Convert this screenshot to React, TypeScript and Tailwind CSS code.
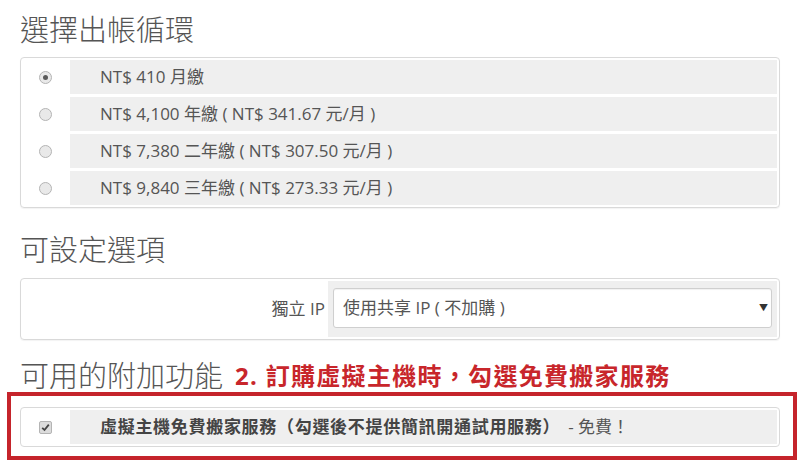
import React from "react";

const FONT = '"Open Sans", "Noto Sans CJK TC", sans-serif';

function Radio({ checked }: { checked?: boolean }) {
  return (
    <span className="flex h-[13px] w-[13px] items-center justify-center rounded-full border border-[#b4b4b4] bg-[#e9e9e9]">
      {checked && <span className="h-[5px] w-[5px] rounded-full bg-[#5a5a5a]" />}
    </span>
  );
}

function Check() {
  return (
    <span className="flex h-[13px] w-[13px] items-center justify-center rounded-[2px] border border-[#b4b4b4] bg-[#dcdcdc]">
      <svg width="9" height="9" viewBox="0 0 9 9">
        <path d="M1.2 4.8 L3.5 7 L7.8 1.6" fill="none" stroke="#444" strokeWidth="1.8" />
      </svg>
    </span>
  );
}

const rows = [
  { t: "NT$ 410 月繳", c: true },
  { t: "NT$ 4,100 年繳 ( NT$ 341.67 元/月 )" },
  { t: "NT$ 7,380 二年繳 ( NT$ 307.50 元/月 )" },
  { t: "NT$ 9,840 三年繳 ( NT$ 273.33 元/月 )" },
];

export default function App() {
  return (
    <div
      className="h-[468px] w-[800px] overflow-hidden bg-white px-[20px] text-[#555]"
      style={{ fontFamily: FONT }}
    >
      <h2 className="mt-[14px] h-[32px] text-[29px] font-light leading-[32px] text-[#555]">
        選擇出帳循環
      </h2>
      <div className="mt-[11px] flex flex-col gap-[3px] rounded-[4px] border border-[#d9d9d9] p-[2px] shadow-[0_1px_1px_rgba(0,0,0,0.05)]">
        {rows.map((r) => (
          <div key={r.t} className="flex h-[34px]">
            <div className="flex w-[47px] items-center justify-center pr-[2px]">
              <Radio checked={r.c} />
            </div>
            <div className="flex flex-1 items-center bg-[#efefef] pl-[30px] text-[17px]">
              {r.t}
            </div>
          </div>
        ))}
      </div>

      <h2 className="mt-[26px] h-[32px] text-[29px] font-light leading-[32px] text-[#555]">
        可設定選項
      </h2>
      <div className="mt-[12px] flex rounded-[4px] border border-[#d9d9d9] p-[2px] shadow-[0_1px_1px_rgba(0,0,0,0.05)]">
        <div className="flex flex-1 items-center justify-end pr-[3px] text-[17px]">獨立 IP</div>
        <div className="w-[449px] bg-[#efefef] px-[5px] pt-[7px] pb-[9px]">
          <div className="flex h-[40px] items-center justify-between rounded-[3px] border border-[#cfcfcf] bg-white pl-[9px] pr-[3px] text-[17px] shadow-[inset_0_1px_1px_rgba(0,0,0,0.06)]">
            <span>使用共享 IP ( 不加購 )</span>
            <span className="text-[9px] text-[#333]">▼</span>
          </div>
        </div>
      </div>

      <div className="mt-[20px] flex h-[32px] items-center">
        <h2 className="text-[29px] font-light leading-[32px] text-[#555]">可用的附加功能</h2>
        <span className="ml-[12px] text-[24px] font-bold tracking-[1.3px] text-[#c8262b]">
          2. 訂購虛擬主機時，勾選免費搬家服務
        </span>
      </div>
      <div className="-ml-[13px] -mr-[17px] border-[4px] border-[#c5242b] pt-[11px] pb-[9px] pl-[9px] pr-[13px]">
        <div className="flex rounded-[4px] border border-[#d9d9d9] p-[2px]">
          <div className="flex h-[34px] w-[47px] items-center justify-center pr-[2px]">
            <Check />
          </div>
          <div className="flex flex-1 items-center bg-[#efefef] pl-[30px] text-[17px]">
            <span className="font-bold tracking-[0.7px] text-[#444]">
              虛擬主機免費搬家服務（勾選後不提供簡訊開通試用服務）
            </span>
            <span className="ml-[8px]">- 免費！</span>
          </div>
        </div>
      </div>
    </div>
  );
}
